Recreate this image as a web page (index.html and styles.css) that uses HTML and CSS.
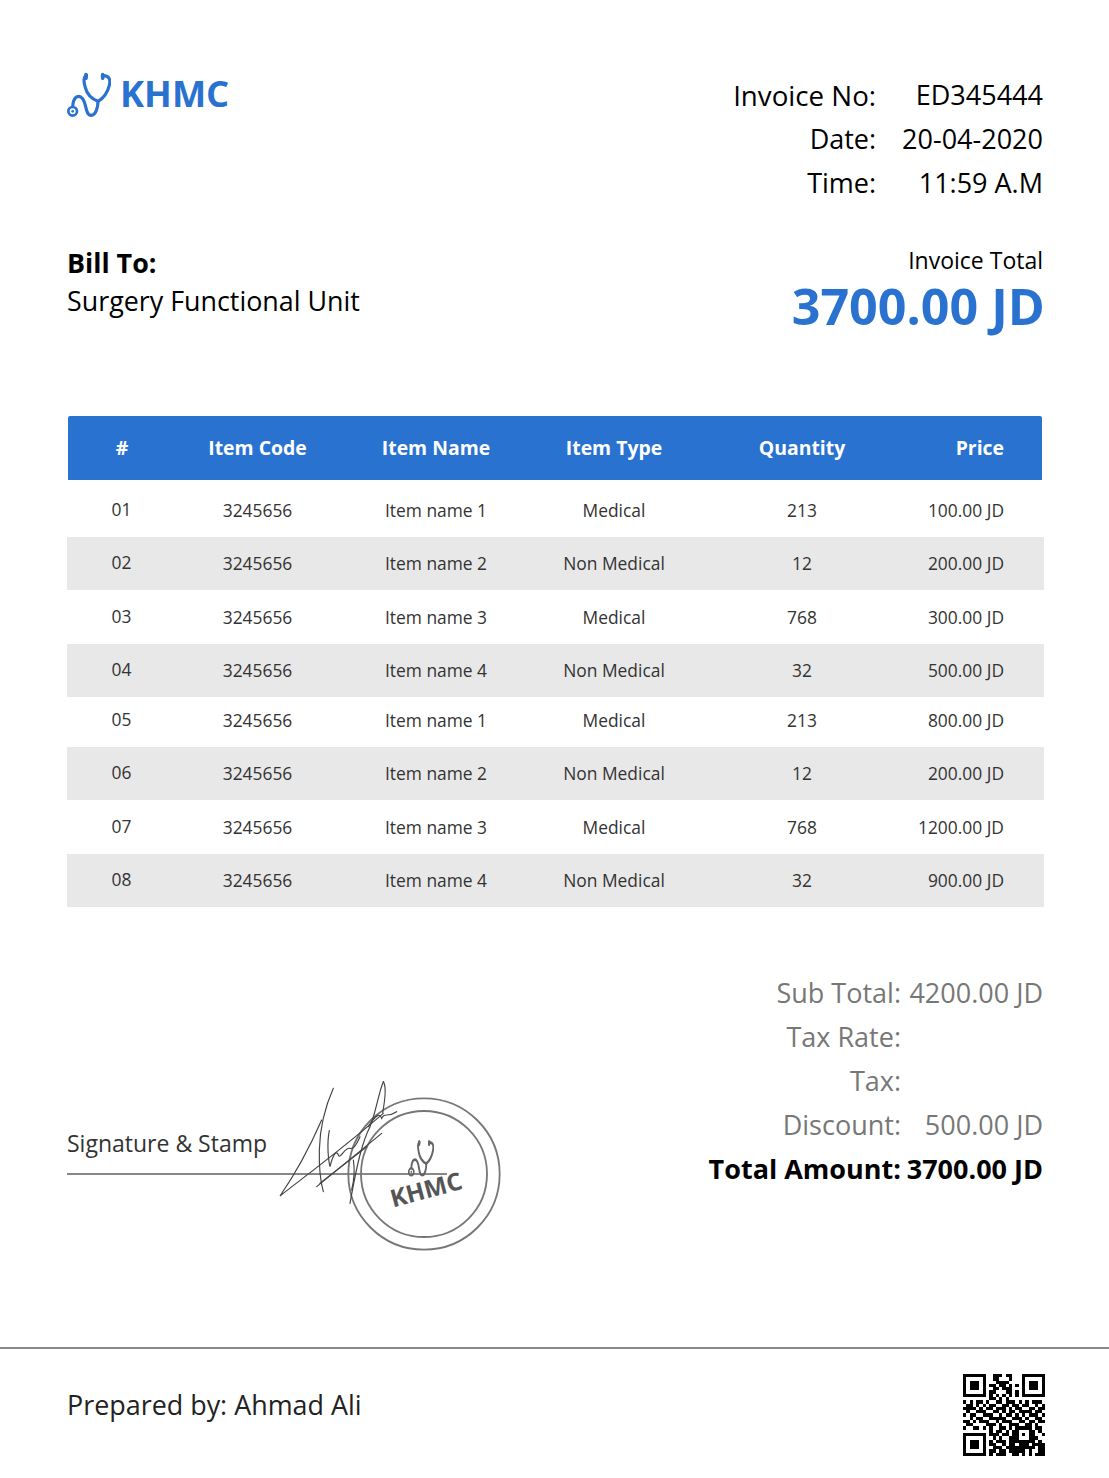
FILE: index.html
```html
<!DOCTYPE html>
<html>
<head>
  <title>Invoice ED345444</title>
  <link rel="stylesheet" href="styles.css">
</head>
<body>
  <svg class="defs">
    <symbol id="steth" viewBox="50 45 135 135" preserveAspectRatio="none">
      <path d="M116 56 C100 56 103 75 108 92 C113 112 125 125 146 133 C165 122 175 105 180 85 C184 68 180 56 162 56" fill="none" stroke-width="9.5"/>
      <path d="M146 133 C146 150 140 175 125 175 C108 175 112 140 100 125 C90 113 72 115 70 150" fill="none" stroke-width="9.5"/>
      <circle cx="70" cy="163" r="13" fill="none" stroke-width="8"/>
      <circle cx="70" cy="163" r="4" stroke="none"/>
      <path d="M110 53 V64 M160 53 V64" fill="none" stroke-width="11" stroke-linecap="round"/>
    </symbol>
  </svg>

  <div class="page">
    <header class="top">
      <div class="logo">
        <svg class="logo-icon"><use href="#steth"/></svg>
        <span class="logo-text">KHMC</span>
      </div>
      <div class="meta">
        <span class="meta-strong">Invoice No:</span><span class="meta-value">ED345444</span>
        <span>Date:</span><span>20-04-2020</span>
        <span>Time:</span><span>11:59 A.M</span>
      </div>
    </header>

    <section class="bill">
      <div class="bill-to">
        <strong>Bill To:</strong>
        <span>Surgery Functional Unit</span>
      </div>
      <div class="bill-total">
        <span>Invoice Total</span>
        <strong>3700.00 JD</strong>
      </div>
    </section>

    <section class="items">
      <div class="item-row item-head">
        <div>#</div><div>Item Code</div><div>Item Name</div><div>Item Type</div><div>Quantity</div><div class="price">Price</div>
      </div>
      <div class="item-row row-first">
        <div class="num">01</div><div>3245656</div><div>Item name 1</div><div>Medical</div><div>213</div><div class="price">100.00 JD</div>
      </div>
      <div class="item-row alt">
        <div class="num">02</div><div>3245656</div><div>Item name 2</div><div>Non Medical</div><div>12</div><div class="price">200.00 JD</div>
      </div>
      <div class="item-row">
        <div class="num">03</div><div>3245656</div><div>Item name 3</div><div>Medical</div><div>768</div><div class="price">300.00 JD</div>
      </div>
      <div class="item-row alt">
        <div class="num">04</div><div>3245656</div><div>Item name 4</div><div>Non Medical</div><div>32</div><div class="price">500.00 JD</div>
      </div>
      <div class="item-row row-short">
        <div class="num">05</div><div>3245656</div><div>Item name 1</div><div>Medical</div><div>213</div><div class="price">800.00 JD</div>
      </div>
      <div class="item-row alt">
        <div class="num">06</div><div>3245656</div><div>Item name 2</div><div>Non Medical</div><div>12</div><div class="price">200.00 JD</div>
      </div>
      <div class="item-row">
        <div class="num">07</div><div>3245656</div><div>Item name 3</div><div>Medical</div><div>768</div><div class="price">1200.00 JD</div>
      </div>
      <div class="item-row alt">
        <div class="num">08</div><div>3245656</div><div>Item name 4</div><div>Non Medical</div><div>32</div><div class="price">900.00 JD</div>
      </div>
    </section>

    <section class="bottom">
      <div class="sign">
        <span class="sign-label">Signature &amp; Stamp</span>
        <div class="sign-line"></div>
        <!-- stamp and signature sit over the line -->
        <svg class="stamp" viewBox="0 0 720 570">
          <g fill="none" stroke="#777" stroke-width="5.5">
            <circle cx="462" cy="312" r="227"/>
            <circle cx="462" cy="312" r="189"/>
          </g>
          <use href="#steth" x="412" y="208" width="80" height="112" class="stamp-icon"/>
          <text x="475" y="384" text-anchor="middle" transform="rotate(-15 475 384)" class="stamp-text">KHMC</text>
          <g fill="none" stroke="#444" stroke-width="3.5" stroke-linecap="round">
            <path d="M190 55 C170 100 150 160 148 240 C147 290 150 330 160 365"/>
            <path d="M155 150 C120 230 70 320 30 378 C90 330 200 250 340 130"/>
            <path d="M140 350 L335 190"/>
            <path d="M150 340 L290 230"/>
            <path d="M340 35 C325 70 320 120 300 170 C280 210 265 260 240 400"/>
            <path d="M340 35 C350 50 345 90 338 128"/>
            <path d="M178 182 C170 220 175 270 180 290 C190 250 200 240 205 255 C210 270 225 230 240 235 C255 240 265 210 270 200"/>
            <path d="M295 170 C320 130 330 130 335 145 C345 125 350 145 380 125"/>
            <path d="M250 270 C255 300 250 340 245 360"/>
          </g>
        </svg>
      </div>
      <div class="summary">
        <span>Sub Total:</span><span>4200.00 JD</span>
        <span>Tax Rate:</span><span></span>
        <span>Tax:</span><span></span>
        <span>Discount:</span><span>500.00 JD</span>
        <span class="grand">Total Amount:</span><span class="grand">3700.00 JD</span>
      </div>
    </section>

    <footer class="foot">
      <span>Prepared by: Ahmad Ali</span>
      <svg class="qr" viewBox="0 0 25 25" shape-rendering="crispEdges">
        <path fill="#000" fill-rule="evenodd" d="M0 0h7v7h-7z M1 1v5h5v-5z M2 2h3v3h-3z M18 0h7v7h-7z M19 1v5h5v-5z M20 2h3v3h-3z M0 18h7v7h-7z M1 19v5h5v-5z M2 20h3v3h-3z"/>
        <path fill="none" stroke="#000" d="M9 .5h3M13 .5h2
          M9 1.5h2M14 1.5h1
          M10 2.5h4
          M8 3.5h2M11 3.5h2M14 3.5h1M16 3.5h1
          M9 4.5h2M12 4.5h3
          M8 5.5h2M13 5.5h2M16 5.5h1
          M8 6.5h1M10 6.5h1M12 6.5h1M14 6.5h1M16 6.5h1
          M8 7.5h2M11 7.5h1M13 7.5h1
          M0 8.5h1M2 8.5h1M4 8.5h2M7 8.5h1M10 8.5h2M13 8.5h3M17 8.5h1M19 8.5h1M21 8.5h3
          M1 9.5h2M4 9.5h1M6 9.5h1M8 9.5h2M12 9.5h2M15 9.5h2M18 9.5h2M22 9.5h1M24 9.5h1
          M0 10.5h4M5 10.5h1M7 10.5h2M10 10.5h3M14 10.5h1M16 10.5h2M20 10.5h2M23 10.5h2
          M1 11.5h1M4 11.5h3M9 11.5h2M12 11.5h1M14 11.5h2M17 11.5h4M22 11.5h2
          M0 12.5h1M2 12.5h2M6 12.5h3M11 12.5h1M13 12.5h2M16 12.5h1M18 12.5h1M20 12.5h3M24 12.5h1
          M2 13.5h1M4 13.5h2M8 13.5h5M15 13.5h3M19 13.5h1M22 13.5h2
          M0 14.5h2M3 14.5h1M5 14.5h3M10 14.5h1M12 14.5h3M17 14.5h2M20 14.5h2M23 14.5h2
          M1 15.5h2M7 15.5h3M11 15.5h1M14 15.5h3M19 15.5h2M22 15.5h1
          M0 16.5h1M3 16.5h2M6 16.5h1M8 16.5h1M11 16.5h2M14 16.5h1M16 16.5h5M22 16.5h2
          M8 17.5h1M10 17.5h2M13 17.5h1M15 17.5h2M20 17.5h2M23 17.5h1
          M8 18.5h3M12 18.5h2M15 18.5h2M18 18.5h1M20 18.5h2M24 18.5h1
          M9 19.5h1M11 19.5h1M14 19.5h3M20 19.5h3
          M8 20.5h1M10 20.5h3M14 20.5h8M23 20.5h1
          M8 21.5h2M12 21.5h1M14 21.5h2M17 21.5h3M21 21.5h4
          M9 22.5h3M13 22.5h9M23 22.5h2
          M8 23.5h2M11 23.5h2M14 23.5h5M20 23.5h1M23 23.5h2
          M8 24.5h1M10 24.5h3M15 24.5h2M18 24.5h1M20 24.5h1M22 24.5h3"/>
      </svg>
    </footer>
  </div>
</body>
</html>
```

FILE: styles.css
```css
* {
  box-sizing: border-box;
}

body {
  margin: 0;
  background-color: #fff;
  color: #000;
  font-family: "Open Sans", sans-serif;
}

.defs {
  display: none;
}

.page {
  width: 1109px;
  height: 1478px;
  overflow: hidden;
}

/* header */
.top {
  display: flex;
  justify-content: space-between;
  align-items: flex-start;
  padding: 72px 66px 0 66px;
  height: 229px;
}

.logo {
  display: flex;
  gap: 9px;
}

.logo-icon {
  width: 45px;
  height: 45px;
  color: #2a72d0;
  stroke: #2a72d0;
  fill: #2a72d0;
}

.logo-text {
  font-size: 36.3px;
  font-weight: 700;
  line-height: 42px;
  color: #2a72d0;
}

.meta {
  display: grid;
  grid-template-columns: max-content max-content;
  column-gap: 26px;
  justify-items: end;
  font-size: 27px;
  line-height: 44px;
  margin-top: 1px;
}

.meta-strong {
  font-size: 27.7px;
  font-weight: 500;
}

.meta-value {
  font-weight: 500;
}

/* bill to */
.bill {
  display: flex;
  justify-content: space-between;
  padding: 0 66px 0 67px;
  height: 187px;
}

.bill-to {
  display: flex;
  flex-direction: column;
  font-size: 26.85px;
  line-height: 38px;
  padding-top: 15px;
}

.bill-total {
  display: flex;
  flex-direction: column;
  align-items: flex-end;
  font-size: 23px;
  line-height: 32px;
  padding-top: 15px;
}

.bill-total strong {
  font-size: 50.2px;
  line-height: 60px;
  margin-right: -2px;
  color: #2a72d0;
}

/* table */
.items {
  display: grid;
  grid-template-columns: 109px 163px 194px 162px 214px 135px;
  grid-template-rows: 64px 57px 53px 54px 53px 50px 53px 54px 53px;
  margin-left: 67px;
  width: 977px;
  color: #333;
  font-size: 17.4px;
}

.item-row {
  display: grid;
  grid-template-columns: subgrid;
  grid-column: 1 / -1;
  align-items: center;
  text-align: center;
}

.item-head {
  margin: 0 2px 0 1px;
  padding-bottom: 2px;
  background-color: #2a72d0;
  color: #fff;
  font-size: 19.4px;
  font-weight: 700;
  border-radius: 2px 2px 0 0;
}

.alt {
  padding-bottom: 2px;
  background-color: #e8e8e8;
}

.row-first {
  padding-top: 3px;
}

.row-short {
  padding-bottom: 4px;
}

.num {
  margin-top: -2px;
}

.price {
  text-align: right;
  padding-right: 40px;
}

.item-head .price {
  padding-right: 38px;
}

/* signature + totals */
.bottom {
  display: flex;
  justify-content: space-between;
  align-items: flex-start;
  padding: 64px 66px 0 67px;
  height: 440px;
}

.sign {
  position: relative;
  width: 380px;
  padding-top: 153px;
  font-size: 23px;
}

.sign-label {
  display: block;
  line-height: 38px;
  color: #333;
}

.sign-line {
  height: 2px;
  margin-top: 11px;
  background-color: #888;
}

.stamp {
  position: absolute;
  left: 203px;
  top: 99px;
  width: 240px;
  height: 190px;
}

.stamp-icon {
  color: #666;
  stroke: #666;
  fill: #666;
}

.stamp-text {
  font-family: "Open Sans", sans-serif;
  font-size: 73px;
  font-weight: 700;
  fill: #555;
}

.summary {
  display: grid;
  grid-template-columns: max-content 142px;
  justify-items: end;
  font-size: 27px;
  line-height: 44px;
  color: #777;
}

.grand {
  color: #000;
  font-weight: 700;
}

/* footer */
.foot {
  display: flex;
  justify-content: space-between;
  align-items: flex-start;
  padding: 25px 64px 0 67px;
  border-top: 2px solid #888;
  font-size: 26.9px;
  color: #222;
}

.foot span {
  margin-top: 12px;
}

.qr {
  width: 82px;
  height: 82px;
}
```
